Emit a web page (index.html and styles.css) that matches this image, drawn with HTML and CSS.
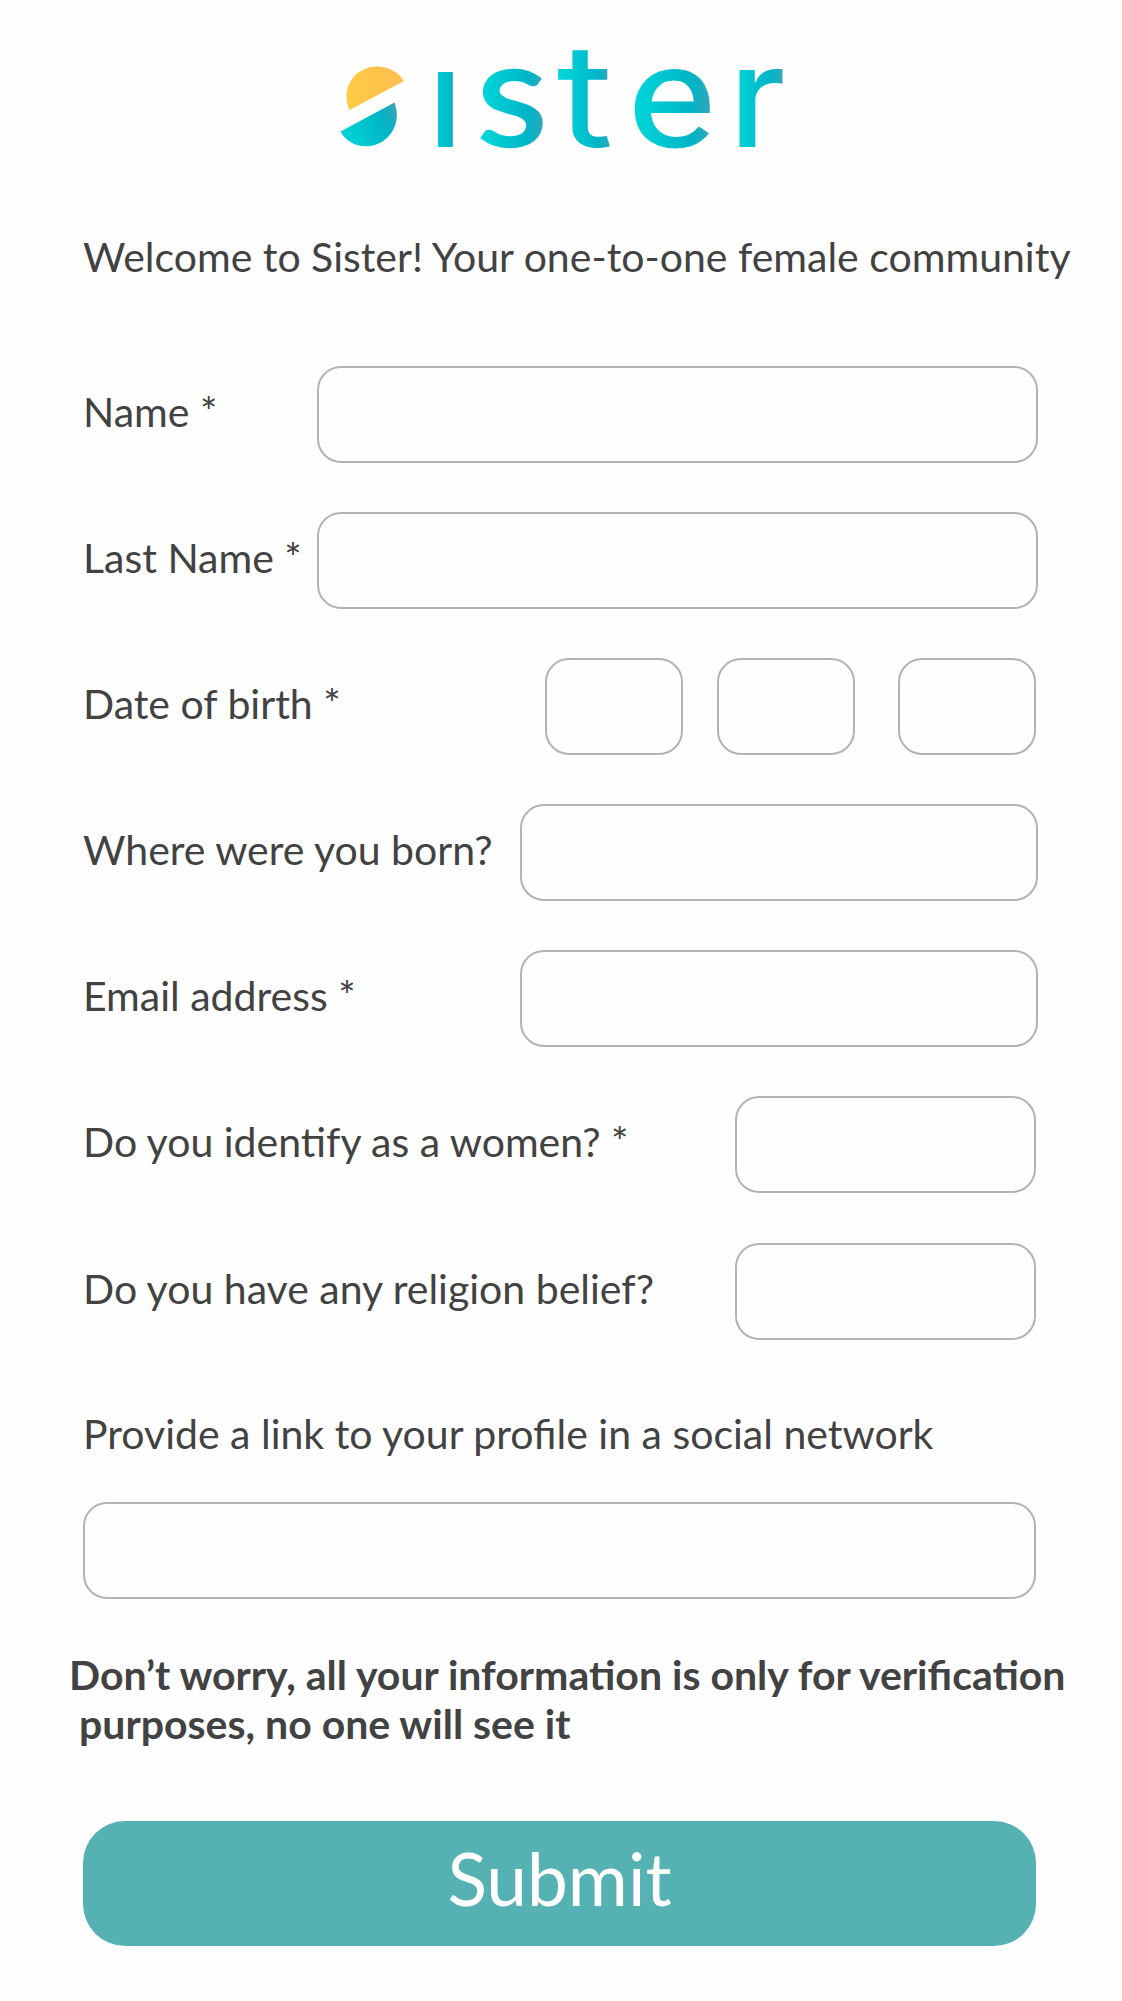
FILE: index.html
```html
<!DOCTYPE html>
<html lang="en">
<head>
<meta charset="utf-8">
<title>Sister</title>
<link rel="stylesheet" href="styles.css">
</head>
<body>
<main class="page">
  <header class="brand">
    <svg class="logo" width="500" height="210" viewBox="316 0 500 210" role="img" aria-label="Sister">
      <defs>
        <linearGradient id="sun" x1="0" y1="0.6" x2="1" y2="0.4">
          <stop offset="0" stop-color="#ffcb45"/><stop offset="1" stop-color="#ffbe51"/>
        </linearGradient>
        <linearGradient id="sea" x1="0" y1="0.7" x2="1" y2="0.3">
          <stop offset="0" stop-color="#00d4d8"/><stop offset="0.75" stop-color="#00b5c6"/><stop offset="1" stop-color="#2fa6bd"/>
        </linearGradient>
        <linearGradient id="teal" x1="0.08" x2="0.94">
          <stop offset="0" stop-color="#00d6da"/><stop offset="0.75" stop-color="#00b4c6"/><stop offset="1" stop-color="#32a7bd"/>
        </linearGradient>
      </defs>
      <path fill="url(#sun)" d="M349.500 110C344 98 346 84 355 75.500C370 61 394 65 404 81Z"/>
      <path fill="url(#sea)" d="M340.500 131.500L394.500 102.500C399 115 397 127 388.500 136.500C375 151 350 149.500 340.500 131.500Z"/>
      <g class="letters">
        <text transform="translate(428 147)">ı</text>
        <text class="letter-s" transform="translate(476.500 145.500) scale(1.12 1)">s</text>
        <text class="letter-t" transform="translate(556.500 147) scale(1.26 1.04)">t</text>
        <text class="letter-e" transform="translate(628 147) scale(1.15 1)">e</text>
        <text transform="translate(729 147) scale(1.06 1.02)">r</text>
      </g>
    </svg>
  </header>
  <p class="welcome">Welcome to Sister! Your one-to-one female community</p>
  <form class="form">
    <div class="row row-wide"><label class="label" for="name">Name *</label><input class="field field-name" id="name"></div>
    <div class="row row-wide"><label class="label" for="last">Last Name *</label><input class="field field-name" id="last"></div>
    <div class="row"><label class="label" for="day">Date of birth *</label>
      <div class="date"><input class="field field-date" id="day"><input class="field field-date" aria-label="Month"><input class="field field-date field-year" aria-label="Year"></div></div>
    <div class="row row-wide"><label class="label" for="born">Where were you born?</label><input class="field field-mid" id="born"></div>
    <div class="row row-wide"><label class="label" for="email">Email address *</label><input class="field field-mid" id="email"></div>
    <div class="row"><label class="label" for="women">Do you identify as a women? *</label><input class="field field-short" id="women"></div>
    <div class="row"><label class="label" for="belief">Do you have any religion belief?</label><input class="field field-short" id="belief"></div>
    <div class="stack"><label class="label label-link" for="link">Provide a link to your profile in a social network</label><input class="field" id="link"></div>
    <p class="note">Don’t worry, all your information is only for verification<br><span class="note-next">purposes, no one will see it</span></p>
    <button class="submit" type="button">Submit</button>
  </form>
</main>
</body>
</html>
```
FILE: styles.css
```css
* { box-sizing: border-box; }
body {
  margin: 0;
  background: #fefefe;
  color: #424242;
  font-family: Lato, "Open Sans", sans-serif;
  font-size: 41px;
  line-height: 49px;
}
.page { width: 1122px; height: 2001px; padding: 0 0 0 83px; }
.brand { padding-left: 233px; height: 210px; }
.logo { display: block; }
.letters { font-family: Inter, sans-serif; font-size: 138px; font-weight: 500; }
.letters text { fill: url(#teal); stroke: url(#teal); stroke-width: 0; }
.letters .letter-s { font-family: Lato, sans-serif; font-size: 147px; font-weight: 400; stroke-width: 2.5px; }
.letters .letter-t { font-weight: 400; }
.letters .letter-e { font-family: Roboto, sans-serif; font-size: 143px; font-weight: 400; stroke-width: 1px; }
.welcome { margin: 22px 0 0; white-space: nowrap; }
.form { margin-top: 85px; width: 953px; }
.row {
  display: flex;
  justify-content: space-between;
  align-items: flex-start;
  height: 97px;
  margin-bottom: 49.1px;
}
.row-wide { width: 955px; }
.label { line-height: 91px; white-space: nowrap; }
.field {
  display: block;
  width: 100%;
  height: 97px;
  border: 2px solid #b3b3b3;
  border-radius: 24px;
  background: transparent;
  padding: 0 24px;
  font: inherit;
  color: inherit;
}
.field-name { width: 721px; }
.field-mid { width: 518px; }
.field-short { width: 301px; }
.date { display: flex; gap: 34px; }
.field-date { width: 138px; }
.field-year { margin-left: 9px; }
.stack .label { display: block; height: 113px; }
.label-link { line-height: 90px; }
.note {
  margin: 51px 0 0 -14px;
  font-weight: 700;
  white-space: nowrap;
}
.note-next { padding-left: 10px; }
.submit {
  display: block;
  width: 953px;
  height: 125px;
  margin-top: 73px;
  padding: 0 0 11px;
  border: 0;
  border-radius: 42px;
  background: #55b1b2;
  color: #fff;
  font: 400 73px/88px Lato, "Open Sans", sans-serif;
}
```
